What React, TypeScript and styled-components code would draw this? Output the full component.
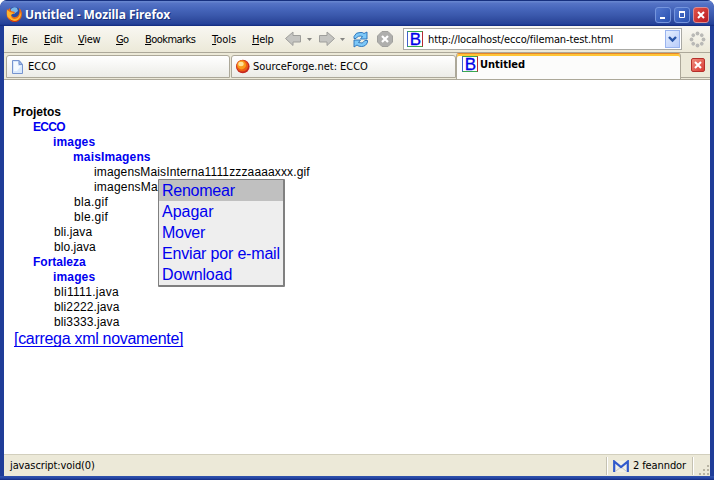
import React from 'react';
import styled, { createGlobalStyle } from 'styled-components';

const GlobalStyle = createGlobalStyle`
  * { box-sizing: border-box; }
  body { margin: 0; background: #fff; overflow: hidden; }
`;

const Window = styled.div`
  width: 714px;
  height: 480px;
  display: flex;
  flex-direction: column;
  border-radius: 7px 7px 0 0;
  overflow: hidden;
  background: #1f3d98;
  color: #000;
  font: 11px/14px 'DejaVu Sans Condensed', 'DejaVu Sans', sans-serif;
  font-stretch: condensed;
  white-space: nowrap;
`;
const TitleBar = styled.header`
  height: 26px;
  flex: none;
  display: flex;
  align-items: center;
  padding: 3px 6px 0;
  border-radius: 7px 7px 0 0;
  background: linear-gradient(#16307f 0 1px, #6685cf 1px 2px, #5674c6 3px, #4868bd 8px, #3b59ad 15px, #304c9f 20px, #24429a 24px, #10297c 26px);
`;
const Title = styled.h1`
  flex: 1;
  margin: 0 0 0 2px;
  color: #fff;
  font: bold 12px/18px 'Open Sans', sans-serif;
  letter-spacing: -0.08px;
  text-shadow: 1px 1px #17317e;
`;
const Controls = styled.div`
  display: flex;
  gap: 3px;
  margin-right: -1px;
`;
const ControlButton = styled.button<{ $danger?: boolean }>`
  width: 16px;
  height: 16px;
  padding: 0;
  border: 1px solid ${p => (p.$danger ? '#db8d91' : '#7595dd')};
  border-radius: 3px;
  background: ${p => (p.$danger ? 'linear-gradient(135deg, #e25447, #b91922)' : 'linear-gradient(135deg, #5377ce, #2850b0)')};
  svg { display: block; }
`;
const Body = styled.div`
  flex: 1;
  min-height: 0;
  margin: 0 4px;
  display: flex;
  flex-direction: column;
  background: #fff;
`;
const Toolbar = styled.div`
  height: 27px;
  flex: none;
  display: flex;
  align-items: center;
  background: linear-gradient(#f8f7f2, #ece9d8);
  border-bottom: 1px solid #aca899;
`;
const MenuItem = styled.span<{ $w: number; $ls?: number }>`
  width: ${p => p.$w}px;
  letter-spacing: ${p => p.$ls ?? 0}px;
`;
const Accel = styled.span`
  text-decoration: underline;
  text-underline-offset: 1px;
`;
const Nav = styled.div`
  display: flex;
  align-items: center;
  width: 118px;
  height: 24px;
`;
const Address = styled.div`
  width: 279px;
  height: 22px;
  display: flex;
  align-items: center;
  padding: 0 1px 0 3px;
  border: 1px solid #a9a9a4;
  background: #fff;
`;
const Url = styled.span`
  flex: 1;
  margin: 1px 0 0 5px;
  letter-spacing: -0.12px;
`;
const Drop = styled.span`
  width: 15px;
  height: 18px;
  display: grid;
  place-items: center;
  border: 1px solid #9ab4ef;
  background: linear-gradient(135deg, #e5efff, #b9ccfa);
`;
const Throbber = styled.svg`
  margin-left: 7px;
`;
const TabStrip = styled.div`
  height: 27px;
  flex: none;
  display: flex;
  align-items: flex-end;
  padding: 0 0 0 2px;
  background: #ece9d8;
  border-bottom: 1px solid #aca899;
`;
const Tab = styled.div<{ $active?: boolean; $w: number; $gap?: number }>`
  width: ${p => p.$w}px;
  height: ${p => (p.$active ? 26 : 23)}px;
  margin-right: ${p => p.$gap ?? 0}px;
  margin-bottom: ${p => (p.$active ? 0 : 1)}px;
  display: flex;
  align-items: ${p => (p.$active ? 'flex-start' : 'center')};
  gap: ${p => (p.$active ? 2 : 1)}px;
  padding: ${p => (p.$active ? '2px 0 0 5px' : '0 0 0 4px')};
  border: 1px solid #aca899;
  border-bottom-width: ${p => (p.$active ? 0 : 1)}px;
  border-top: ${p => (p.$active ? '1px solid #e5862b' : '1px solid #aca899')};
  border-radius: 3px 3px 0 0;
  background: ${p => (p.$active ? '#fcfcfb' : 'linear-gradient(#fff, #ecece7)')};
  box-shadow: ${p => (p.$active ? 'inset 0 2px #ffc636' : 'none')};
`;
const TabLabel = styled.span<{ $bold?: boolean; $ls?: number }>`
  font-weight: ${p => (p.$bold ? 'bold' : 'normal')};
  letter-spacing: ${p => p.$ls ?? 0}px;
  margin-top: ${p => (p.$bold ? 2 : 1)}px;
`;
const TabEnd = styled.div`
  flex: 1;
  height: 25px;
  padding: 5px 0 0 10px;
  border-bottom: 1px solid #aca899;
  margin-bottom: 1px;
`;
const CloseTab = styled.button`
  width: 14px;
  height: 14px;
  padding: 0;
  border: 1px solid #b5302b;
  border-radius: 2px;
  background: linear-gradient(135deg, #ef8d7c, #d93b35);
  svg { display: block; }
`;
const Page = styled.main`
  position: relative;
  flex: 1;
  padding: 25px 0 0 9px;
  background: #fff;
  font-family: 'Liberation Sans', Arial, sans-serif;
  font-stretch: normal;
`;
const TreeRow = styled.div<{ $level: number; $folder?: boolean; $root?: boolean; $ls?: number }>`
  height: 15px;
  padding-left: ${p => p.$level * 20 + (p.$folder || p.$root ? 0 : 1)}px;
  font-size: 12px;
  line-height: 15px;
  font-weight: ${p => (p.$folder || p.$root ? 'bold' : 'normal')};
  color: ${p => (p.$folder ? '#0000f0' : '#000')};
  letter-spacing: ${p => p.$ls ?? 0}px;
`;
const ReloadLink = styled.a`
  display: block;
  width: max-content;
  margin: -1px 0 0 1px;
  color: #0000ee;
  font-size: 16px;
  line-height: 19px;
  letter-spacing: -0.3px;
  text-decoration: underline;
  text-underline-offset: 2px;
  text-decoration-thickness: 1px;
  text-decoration-skip-ink: none;
`;
const ContextMenu = styled.div`
  position: absolute;
  left: 154px;
  top: 99px;
  width: 127px;
  height: 108px;
  border: 1px solid #808080;
  border-right-width: 2px;
  border-bottom-width: 2px;
  border-radius: 1px;
  background: #eee;
`;
const ContextItem = styled.div<{ $selected?: boolean; $ls?: number }>`
  height: 21px;
  padding-left: 3px;
  color: #0000ee;
  font-size: 16px;
  line-height: 22px;
  letter-spacing: ${p => p.$ls ?? 0}px;
  background: ${p => (p.$selected ? '#c0c0c0' : 'transparent')};
`;
const StatusBar = styled.footer`
  height: 22px;
  flex: none;
  display: flex;
  align-items: stretch;
  line-height: 22px;
  background: #ece9d8;
  border-top: 1px solid #d2cfbd;
`;
const StatusText = styled.span`
  flex: 1;
  padding-left: 6px;
  letter-spacing: -0.1px;
`;
const MailPanel = styled.div`
  display: flex;
  align-items: center;
  gap: 4px;
  width: 87px;
  margin: 2px 0 1px;
  padding-left: 6px;
  letter-spacing: -0.1px;
  border-left: 1px solid #c5c2b2;
  border-right: 1px solid #c5c2b2;
  box-shadow: inset 1px 0 #fff, 1px 0 #fff;
`;
const Bottom = styled.div`
  height: 4px;
  flex: none;
  background: linear-gradient(#3152ac, #2648a7 2px, #132b80);
`;
const Grip = styled.svg`
  align-self: flex-end;
  margin-left: 5px;
`;

const FirefoxIcon = () => (
  <svg width="17" height="17" viewBox="0 0 17 17">
    <circle cx="8.5" cy="8" r="7" fill="#294da2" />
    <path d="M5 3Q8 0 11 2l1 3-4 3-3-2z" fill="#79b8e9" />
    <path d="M1 3Q0 7 1 11q3 5 8 5 7-1 7-9-1-4-3-5 1 3 0 6-2 4-6 3-2-1-2-3h3l1-2-4-1-1-3-2 2z" fill="#e96b16" />
    <path d="M1 4 4 6l4 1-3 2Q5 13 9 13q5-1 5-7l1 3q-2 6-7 6-6-1-7-6z" fill="#ffb52c" />
    <path d="M2 11q3 4 7 4 4 0 6-4-2 5-6 5-5 0-7-5z" fill="#c83412" />
  </svg>
);
const PageIcon = () => (
  <svg width="16" height="16" viewBox="0 0 16 16">
    <path d="M1.500 1.500H8l3.500 4v9h-10z" fill="#d8e8fc" stroke="#7694cf" />
    <path d="M3 3h4v4h3l-4 5H3z" fill="#f5faff" />
    <path d="M8 1.500v4h3.500z" fill="#9fb9ea" stroke="#7694cf" />
  </svg>
);
const BallIcon = () => (
  <svg width="16" height="16" viewBox="0 0 16 16">
    <circle cx="6.800" cy="7.500" r="6.800" fill="#c52821" />
    <circle cx="6.300" cy="6.800" r="5.800" fill="#ed5c15" />
    <circle cx="5.600" cy="6" r="4.400" fill="#f99b1c" />
    <ellipse cx="5" cy="5" rx="2.700" ry="2.200" fill="#ffe39a" />
  </svg>
);
const BadgeBox = styled.span`
  width: 16px;
  height: 16px;
  flex: none;
  border: 1px solid;
  border-color: #38a950 #b82932 #38a950 #4161cc;
  background: #fff;
  color: #0000e9;
  font: 17px/15px 'Liberation Sans', sans-serif;
  text-align: center;
  text-indent: 1px;
  -webkit-text-stroke: 0.3px #0000e9;
`;
const Arrow = ({ flip }: { flip?: boolean }) => (
  <svg width="17" height="16" viewBox="0 0 17 16">
    <path transform={flip ? 'translate(17 0) scale(-1 1)' : undefined} d="M.5 7.500 8 1v3.500h7.500V11H8v3.500z" fill="#c4c4c1" stroke="#9e9e9b" strokeLinejoin="round" />
  </svg>
);
const CaretBox = styled.svg<{ $left: number; $right: number }>`
  margin: 1px ${p => p.$right}px 0 ${p => p.$left}px;
`;
const Caret = ({ left, right }: { left: number; right: number }) => (
  <CaretBox $left={left} $right={right} width="5" height="3" viewBox="0 0 5 3"><path d="M0 0h5L2.500 3z" fill="#868683" /></CaretBox>
);
const ReloadIcon = () => (
  <svg width="17" height="17" viewBox="0 0 17 17">
    <path d="M2 7.500V5.500Q4 1 8 1.500q2.500-.5 4 1L15 1v7H8.500l2-2.500Q6 4 4 7.500z" fill="#7cc8f8" stroke="#276eb7" strokeWidth=".9" />
    <path d="M15.500 9.500V11q-1.500 4.500-6 4.500-3 0-4.500-1.500L2 16V9h6.500l-2 2.500q4 2 6.500-2z" fill="#7cc8f8" stroke="#276eb7" strokeWidth=".9" />
  </svg>
);
const StopBox = styled.svg`
  margin-left: 8px;
`;
const StopIcon = () => (
  <StopBox width="16" height="16" viewBox="0 0 16 16">
    <path d="M5 .5h6L15.500 5v6L11 15.500H5L.5 11V5z" fill="#afafad" stroke="#a0a09d" />
    <path d="m5 5 6 6m0-6-6 6" stroke="#fff" strokeWidth="2.200" />
  </StopBox>
);
const Cross = () => (
  <svg width="12" height="12" viewBox="0 0 12 12"><path d="m3 3 6 6m0-6-6 6" stroke="#fff" strokeWidth="2" /></svg>
);

const tree = [
  { text: 'Projetos', level: 0, root: true, ls: 0 },
  { text: 'ECCO', level: 1, folder: true, ls: -0.7 },
  { text: 'images', level: 2, folder: true, ls: 0.15 },
  { text: 'maisImagens', level: 3, folder: true, ls: 0.15 },
  { text: 'imagensMaisInterna1111zzzaaaaxxx.gif', level: 4, ls: 0.14 },
  { text: 'imagensMaisInterna.gif', level: 4, ls: 0.2 },
  { text: 'bla.gif', level: 3, ls: 0.3 },
  { text: 'ble.gif', level: 3, ls: 0.3 },
  { text: 'bli.java', level: 2, ls: 0.1 },
  { text: 'blo.java', level: 2, ls: 0.05 },
  { text: 'Fortaleza', level: 1, folder: true, ls: 0 },
  { text: 'images', level: 2, folder: true, ls: 0.15 },
  { text: 'bli1111.java', level: 2, ls: 0.3 },
  { text: 'bli2222.java', level: 2, ls: 0.12 },
  { text: 'bli3333.java', level: 2, ls: 0.12 },
];
const menus = [
  { text: 'File', w: 32, ls: -0.2 }, { text: 'Edit', w: 34, ls: -0.2 }, { text: 'View', w: 38, ls: -0.3 },
  { text: 'Go', w: 29, ls: -0.6 }, { text: 'Bookmarks', w: 67, ls: -0.55 }, { text: 'Tools', w: 40, ls: 0 }, { text: 'Help', w: 33, ls: -0.3 },
];
const MenuBar = styled.nav`
  display: flex;
  margin-top: 2px;
  padding-left: 8px;
  width: 281px;
`;

export default function App() {
  return (
    <>
      <GlobalStyle />
      <Window>
        <TitleBar>
          <FirefoxIcon />
          <Title>Untitled - Mozilla Firefox</Title>
          <Controls>
            <ControlButton><svg width="14" height="14"><path d="M4 9h5v2H4z" fill="#fff" /></svg></ControlButton>
            <ControlButton><svg width="14" height="14"><path d="M4.500 4.500v5h5v-5z" fill="none" stroke="#fff" /><path d="M4 3h6v2H4z" fill="#fff" /></svg></ControlButton>
            <ControlButton $danger><svg width="14" height="14"><path d="m4 4 6 6m0-6-6 6" stroke="#fff" strokeWidth="2" /></svg></ControlButton>
          </Controls>
        </TitleBar>
        <Body>
          <Toolbar>
            <MenuBar>
              {menus.map(m => <MenuItem key={m.text} $w={m.w} $ls={m.ls}><Accel>{m.text[0]}</Accel>{m.text.slice(1)}</MenuItem>)}
            </MenuBar>
            <Nav>
              <Arrow /><Caret left={5} right={6} />
              <Arrow flip /><Caret left={5} right={7} />
              <ReloadIcon /><StopIcon />
            </Nav>
            <Address>
              <BadgeBox>B</BadgeBox>
              <Url>http://localhost/ecco/fileman-test.html</Url>
              <Drop><svg width="9" height="7"><path d="m1 1 3.500 3.500L8 1" fill="none" stroke="#2855a8" strokeWidth="2.400" /></svg></Drop>
            </Address>
            <Throbber width="17" height="17" viewBox="-8.500 -8.500 17 17">
              {[0, 45, 90, 135, 180, 225, 270, 315].map(a => <circle key={a} r="1.900" cy="-6" transform={`rotate(${a})`} fill="#b9b9b6" />)}
            </Throbber>
          </Toolbar>
          <TabStrip>
            <Tab $w={224} $gap={1}><PageIcon /><TabLabel>ECCO</TabLabel></Tab>
            <Tab $w={225}><BallIcon /><TabLabel $ls={-0.02}>SourceForge.net: ECCO</TabLabel></Tab>
            <Tab $w={225} $active><BadgeBox>B</BadgeBox><TabLabel $bold>Untitled</TabLabel></Tab>
            <TabEnd><CloseTab><Cross /></CloseTab></TabEnd>
          </TabStrip>
          <Page>
            {tree.map((r, i) => <TreeRow key={i} $level={r.level} $folder={r.folder} $root={r.root} $ls={r.ls}>{r.text}</TreeRow>)}
            <ReloadLink>[carrega xml novamente]</ReloadLink>
            <ContextMenu>
              <ContextItem $selected $ls={-0.25}>Renomear</ContextItem>
              <ContextItem>Apagar</ContextItem>
              <ContextItem $ls={-0.3}>Mover</ContextItem>
              <ContextItem $ls={-0.18}>Enviar por e-mail</ContextItem>
              <ContextItem $ls={-0.12}>Download</ContextItem>
            </ContextMenu>
          </Page>
          <StatusBar>
            <StatusText>javascript:void(0)</StatusText>
            <MailPanel>
              <svg width="16" height="13" viewBox="0 0 16 13"><path d="M1 1h14v11H1z" fill="#f1f0e7" /><path d="m3 11 5-4 5 4" fill="none" stroke="#c9c8c2" /><path d="M1.200 12V1.500L8 7l6.800-5.500V12" fill="none" stroke="#3059cc" strokeWidth="2.200" /></svg>
              2 feanndor
            </MailPanel>
            <Grip width="12" height="12" viewBox="0 0 12 12"><path d="M9 1h2v2H9zM5 5h2v2H5zM9 5h2v2H9zM1 9h2v2H1zM5 9h2v2H5zM9 9h2v2H9z" fill="#b8b4a3" /></Grip>
          </StatusBar>
        </Body>
        <Bottom />
      </Window>
    </>
  );
}
